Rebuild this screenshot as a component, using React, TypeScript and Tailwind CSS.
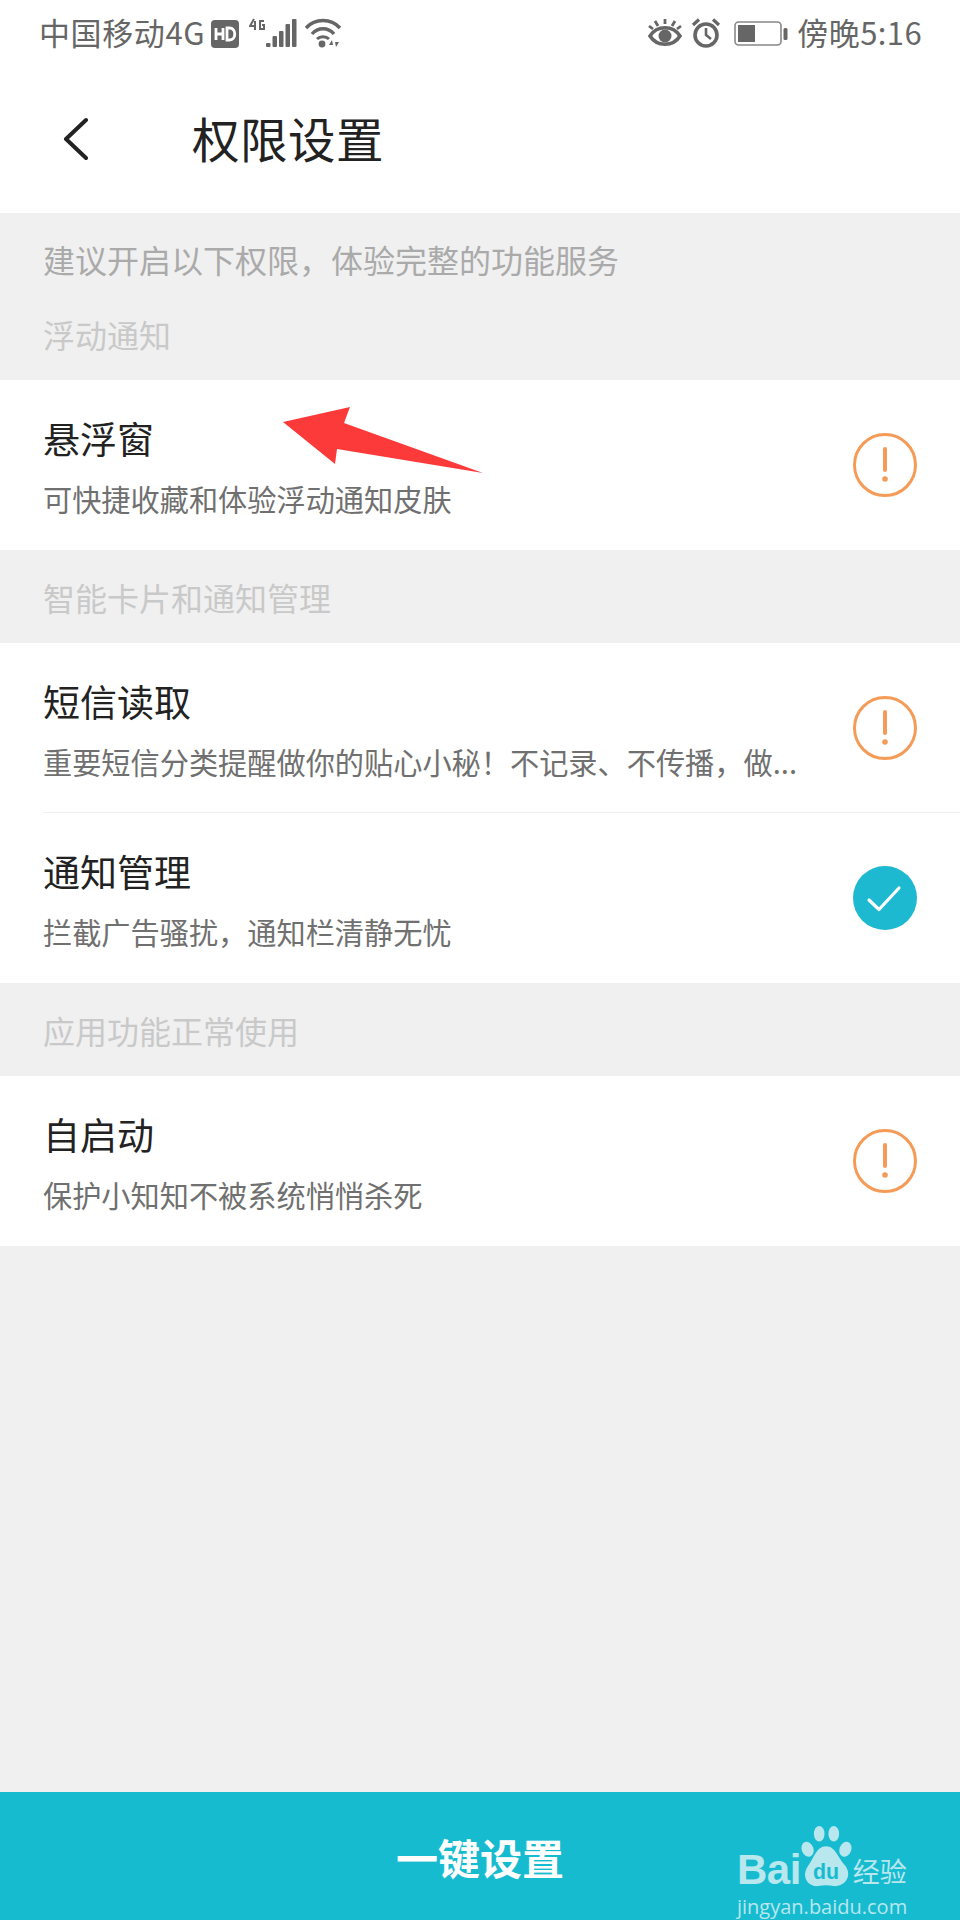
const fontStack = "font-['Noto_Sans_CJK_SC','Noto_Sans',sans-serif]";

function AlertIcon() {
  return (
    <svg width="66" height="66" viewBox="0 0 66 66" className="shrink-0">
      <circle cx="33" cy="33" r="30.5" fill="none" stroke="#f59b58" strokeWidth="3" />
      <line x1="33" y1="17" x2="33" y2="38" stroke="#f59b58" strokeWidth="4" strokeLinecap="round" />
      <circle cx="33" cy="47" r="2.8" fill="#f59b58" />
    </svg>
  );
}

function CheckIcon() {
  return (
    <svg width="66" height="66" viewBox="0 0 66 66" className="shrink-0">
      <circle cx="33" cy="33" r="32" fill="#1cb9d1" />
      <path d="M17 35 L27 44.5 L47 23" fill="none" stroke="#fff" strokeWidth="3.2" strokeLinecap="round" strokeLinejoin="round" />
    </svg>
  );
}

function PermRow({ title, desc, ok, divider }: { title: string; desc: string; ok?: boolean; divider?: boolean }) {
  return (
    <div className="bg-white pl-[43px]">
      <div className={`h-[170px] flex items-center pr-[42px] ${divider ? 'border-b border-[#efefef]' : ''}`}>
        <div className="flex-1 min-w-0 pt-[2px]">
          <div className="text-[37px] leading-[44px] text-[#222] mb-[20px]">{title}</div>
          <div className="text-[29.2px] leading-[36px] text-[#707070] whitespace-nowrap">{desc}</div>
        </div>
        {ok ? <CheckIcon /> : <AlertIcon />}
      </div>
    </div>
  );
}

function SectionLabel({ text }: { text: string }) {
  return <div className="h-[93px] flex items-center pl-[43px] text-[32px] text-[#c9c9c9]">{text}</div>;
}

function StatusBar() {
  return (
    <div className="h-[64px] flex items-center justify-between pl-[39px] pr-[38px] text-[#666]">
      <div className="flex items-center">
        <span className="text-[31px] tracking-[0.6px]">中国移动4G</span>
        <svg width="28" height="28" viewBox="0 0 28 28" className="ml-[6px] mt-[3px]">
          <rect width="28" height="28" rx="4" fill="#666" />
          <path d="M5 8v12M5 14h7M12 8v12" stroke="#fff" strokeWidth="2.8" fill="none" />
          <path d="M16 8v12h2.5c7 0 7-12 0-12z" stroke="#fff" strokeWidth="2.8" fill="none" />
        </svg>
        <svg width="50" height="30" viewBox="0 0 50 30" className="ml-[10px] mt-[2px]">
          <path d="M5 1 L1 8 H7 M6 3 V12" stroke="#666" strokeWidth="2" fill="none" />
          <path d="M15 3 H11 V11 H15 V7 H13" stroke="#666" strokeWidth="2" fill="none" />
          <rect x="17" y="25" width="4.5" height="4" rx="1" fill="#666" />
          <rect x="23.5" y="18" width="4.5" height="11" rx="1" fill="#666" />
          <rect x="30" y="13" width="4.5" height="16" rx="1" fill="#666" />
          <rect x="36.5" y="6" width="4.5" height="23" rx="1" fill="#666" />
          <rect x="43" y="1" width="4.5" height="28" rx="1" fill="#666" />
        </svg>
        <svg width="36" height="30" viewBox="0 0 36 30" className="ml-[6px] mt-[2px]">
          <path d="M1 10 C10 0 26 0 35 10" stroke="#666" strokeWidth="3.4" fill="none" />
          <path d="M7 16 C13 9 23 9 29 16" stroke="#666" strokeWidth="3.4" fill="none" />
          <path d="M12 21 C15 18 21 18 24 21" stroke="#666" strokeWidth="3" fill="none" />
          <circle cx="17" cy="26" r="3.4" fill="#666" />
          <path d="M27 22 L24 27 H28 Z M31 29 L34 24 H30 Z" fill="#666" />
        </svg>
      </div>
      <div className="flex items-center">
        <svg width="34" height="30" viewBox="0 0 34 30" className="mt-[2px]">
          <path d="M2 18 C9 7 25 7 32 18 C25 29 9 29 2 18 Z" stroke="#666" strokeWidth="3.6" fill="none" />
          <circle cx="17" cy="18" r="6.5" fill="#666" />
          <path d="M17 1v5M7 3l3 5M27 3l-3 5M1 8l4 3M33 8l-4 3" stroke="#666" strokeWidth="2.8" />
        </svg>
        <svg width="30" height="30" viewBox="0 0 30 30" className="ml-[9px] mt-[2px]">
          <circle cx="15" cy="17" r="11" stroke="#666" strokeWidth="3.6" fill="none" />
          <path d="M15 10v7l5 4" stroke="#666" strokeWidth="2.6" fill="none" />
          <path d="M2 7 L8 1.5 M28 7 L22 1.5" stroke="#666" strokeWidth="3.2" />
        </svg>
        <svg width="54" height="28" viewBox="0 0 54 28" className="ml-[13px] mt-[2px]">
          <rect x="1" y="3" width="46" height="23" rx="3.5" fill="none" stroke="#888" strokeWidth="1.6" />
          <rect x="4" y="6" width="17" height="17" fill="#666" />
          <rect x="49.5" y="9" width="4" height="12" rx="1.5" fill="#666" />
        </svg>
        <span className="ml-[9px] text-[31px] tracking-[0.4px]">傍晚5:16</span>
      </div>
    </div>
  );
}

function Watermark() {
  return (
    <div className="absolute left-[737px] top-[33px] w-[178px] text-[#b8e7ee] font-['Liberation_Sans',sans-serif]">
      <div className="flex items-end h-[64px] whitespace-nowrap">
        <span className="text-[42px] leading-[38px] font-bold tracking-[-0.5px] shrink-0">Bai</span>
        <svg width="52" height="64" viewBox="0 0 52 66" className="shrink-0 -ml-[1px]">
          <ellipse cx="7" cy="25" rx="6" ry="8" fill="#b8e7ee" transform="rotate(-20 7 25)" />
          <ellipse cx="19" cy="9" rx="5.5" ry="8" fill="#b8e7ee" />
          <ellipse cx="34" cy="9" rx="5.5" ry="8" fill="#b8e7ee" />
          <ellipse cx="46" cy="25" rx="6" ry="8" fill="#b8e7ee" transform="rotate(20 46 25)" />
          <path d="M26 22 C36 22 38 34 46 42 C54 54 44 64 34 63 C28 62 24 62 18 63 C8 64 0 54 7 43 C14 34 16 22 26 22 Z" fill="#b8e7ee" />
          <text x="26" y="56" textAnchor="middle" fontSize="22" fontWeight="700" fill="#17bbd0" fontFamily="Liberation Sans">du</text>
        </svg>
        <span className={`ml-[1px] text-[27px] leading-[36px] text-[#b8e7ee] shrink-0 ${fontStack}`}>经验</span>
      </div>
      <div className="text-[20px] leading-[24px] mt-[6px] whitespace-nowrap font-['Open_Sans',sans-serif]">jingyan.baidu.com</div>
    </div>
  );
}

export default function App() {
  return (
    <div className={`relative w-[960px] h-[1920px] flex flex-col bg-[#f0f0f0] overflow-hidden ${fontStack}`}>
      <div className="bg-white h-[213px] shrink-0">
        <StatusBar />
        <div className="h-[147px] flex items-center">
          <svg width="26" height="44" viewBox="0 0 26 44" className="ml-[62px] mt-[2px]">
            <path d="M24 3 L4 22 L24 41" fill="none" stroke="#222" strokeWidth="4" strokeLinecap="round" strokeLinejoin="round" />
          </svg>
          <h1 className="ml-[104px] text-[47.5px] font-normal text-[#222] tracking-[0.5px]">权限设置</h1>
        </div>
      </div>

      <div className="h-[167px] shrink-0 pl-[43px] pt-[25px]">
        <div className="text-[32px] leading-[42px] text-[#aaa]">建议开启以下权限，体验完整的功能服务</div>
        <div className="text-[32px] leading-[42px] text-[#c9c9c9] mt-[33px]">浮动通知</div>
      </div>

      <PermRow title="悬浮窗" desc="可快捷收藏和体验浮动通知皮肤" />
      <SectionLabel text="智能卡片和通知管理" />
      <PermRow title="短信读取" desc="重要短信分类提醒做你的贴心小秘！不记录、不传播，做..." divider />
      <PermRow title="通知管理" desc="拦截广告骚扰，通知栏清静无忧" ok />
      <SectionLabel text="应用功能正常使用" />
      <PermRow title="自启动" desc="保护小知知不被系统悄悄杀死" />

      <div className="flex-1" />
      <div className="relative h-[128px] shrink-0 bg-[#17bbd0] flex items-center justify-center">
        <span className="text-[42px] font-bold text-white">一键设置</span>
        <Watermark />
      </div>

      {/* red annotation arrow drawn over the page */}
      <svg width="960" height="1920" viewBox="0 0 960 1920" className="absolute inset-0 pointer-events-none">
        <polygon points="283,422 350,407 344,423 483,473 337,449 335,464" fill="#fd3a3a" />
      </svg>
    </div>
  );
}
